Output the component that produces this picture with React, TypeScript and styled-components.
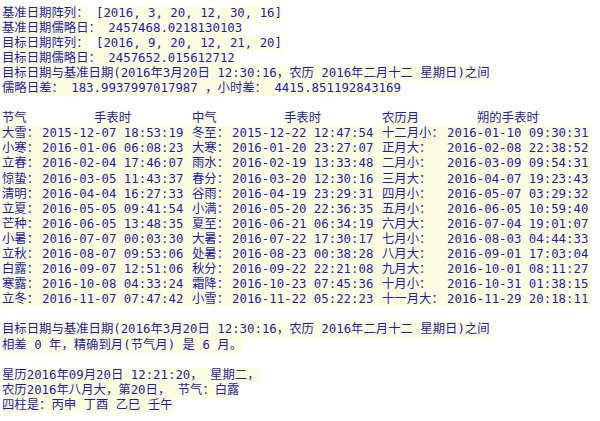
import React from "react";
import styled, { createGlobalStyle } from "styled-components";

const Global = createGlobalStyle`
  html, body { margin: 0; padding: 0; background: #ffffff; }
  body {
    font-family: "DejaVu Sans Mono", "Noto Sans CJK SC", monospace;
    font-size: 12.36px;
    color: #1e1ea8;
  }
`;

const HL = "#fdfde2";
const LH = "15.1px";

const Page = styled.div`
  width: 600px;
  height: 421px;
  box-sizing: border-box;
  overflow: hidden;
  padding: 5.5px 0 0 2px;
  line-height: ${LH};
`;

const Line = styled.div`
  height: ${LH};
  white-space: pre;
  display: flex;
  align-items: flex-start;
`;

const Hl = styled.span`
  display: inline-block;
  height: ${LH};
  line-height: ${LH};
  background: ${HL};
  white-space: pre;
`;

const Gap = styled.span`
  display: inline-block;
  width: 7.44px;
`;

const Table = styled.div`
  display: grid;
  grid-template-columns: 40px 150px 40px 150px 65px 143px;
  grid-auto-rows: ${LH};
`;

const Cell = styled.div<{ $fill?: boolean; $indent?: number }>`
  white-space: pre;
  overflow: visible;
  background: ${(p) => (p.$fill ? HL : "transparent")};
  padding-left: ${(p) => p.$indent ?? 0}px;
`;

type Row = [string, string, string, string, string, string];

const rows: Row[] = [
  ["大雪", "2015-12-07 18:53:19", "冬至", "2015-12-22 12:47:54", "十二月小", "2016-01-10 09:30:31"],
  ["小寒", "2016-01-06 06:08:23", "大寒", "2016-01-20 23:27:07", "正月大", "2016-02-08 22:38:52"],
  ["立春", "2016-02-04 17:46:07", "雨水", "2016-02-19 13:33:48", "二月小", "2016-03-09 09:54:31"],
  ["惊蛰", "2016-03-05 11:43:37", "春分", "2016-03-20 12:30:16", "三月大", "2016-04-07 19:23:43"],
  ["清明", "2016-04-04 16:27:33", "谷雨", "2016-04-19 23:29:31", "四月小", "2016-05-07 03:29:32"],
  ["立夏", "2016-05-05 09:41:54", "小满", "2016-05-20 22:36:35", "五月小", "2016-06-05 10:59:40"],
  ["芒种", "2016-06-05 13:48:35", "夏至", "2016-06-21 06:34:19", "六月大", "2016-07-04 19:01:07"],
  ["小暑", "2016-07-07 00:03:30", "大暑", "2016-07-22 17:30:17", "七月小", "2016-08-03 04:44:33"],
  ["立秋", "2016-08-07 09:53:06", "处暑", "2016-08-23 00:38:28", "八月大", "2016-09-01 17:03:04"],
  ["白露", "2016-09-07 12:51:06", "秋分", "2016-09-22 22:21:08", "九月大", "2016-10-01 08:11:27"],
  ["寒露", "2016-10-08 04:33:24", "霜降", "2016-10-23 07:45:36", "十月小", "2016-10-31 01:38:15"],
  ["立冬", "2016-11-07 07:47:42", "小雪", "2016-11-22 05:22:23", "十一月大", "2016-11-29 20:18:11"],
];

const compare = "目标日期与基准日期(2016年3月20日 12:30:16，农历 2016年二月十二 星期日)之间";

export default function App() {
  return (
    <>
      <Global />
      <Page>
        <Line>
          <Hl>基准日期阵列：</Hl>
          <Gap />
          <Hl>[2016, 3, 20, 12, 30, 16]</Hl>
        </Line>
        <Line>
          <Hl>基准日期儒略日： 2457468.0218130103</Hl>
        </Line>
        <Line>
          <Hl>目标日期阵列：</Hl>
          <Gap />
          <Hl>[2016, 9, 20, 12, 21, 20]</Hl>
        </Line>
        <Line>
          <Hl>目标日期儒略日： 2457652.015612712</Hl>
        </Line>
        <Line>
          <Hl>{compare}</Hl>
        </Line>
        <Line>
          <Hl>儒略日差： 183.9937997017987 ，小时差： 4415.851192843169</Hl>
        </Line>
        <Line />
        <Table>
          <Cell><Hl>节气</Hl></Cell>
          <Cell $indent={52}><Hl>手表时</Hl></Cell>
          <Cell><Hl>中气</Hl></Cell>
          <Cell $indent={52}><Hl>手表时</Hl></Cell>
          <Cell><Hl>农历月</Hl></Cell>
          <Cell $indent={30}><Hl>朔的手表时</Hl></Cell>
          {rows.map((r) => (
            <React.Fragment key={r[0]}>
              <Cell $fill>{r[0]}：</Cell>
              <Cell $fill>{r[1]}</Cell>
              <Cell $fill>{r[2]}：</Cell>
              <Cell $fill>{r[3]}</Cell>
              <Cell $fill>{r[4]}：</Cell>
              <Cell $fill>{r[5]}</Cell>
            </React.Fragment>
          ))}
        </Table>
        <Line />
        <Line>
          <Hl>{compare}</Hl>
        </Line>
        <Line>
          <Hl>相差 0 年，精确到月(节气月) 是 6 月。</Hl>
        </Line>
        <Line />
        <Line>
          <Hl>星历2016年09月20日 12:21:20， 星期二，</Hl>
        </Line>
        <Line>
          <Hl>农历2016年八月大，第20日， 节气：白露</Hl>
        </Line>
        <Line>
          <Hl>四柱是：丙申 丁酉 乙巳 壬午</Hl>
        </Line>
      </Page>
    </>
  );
}
